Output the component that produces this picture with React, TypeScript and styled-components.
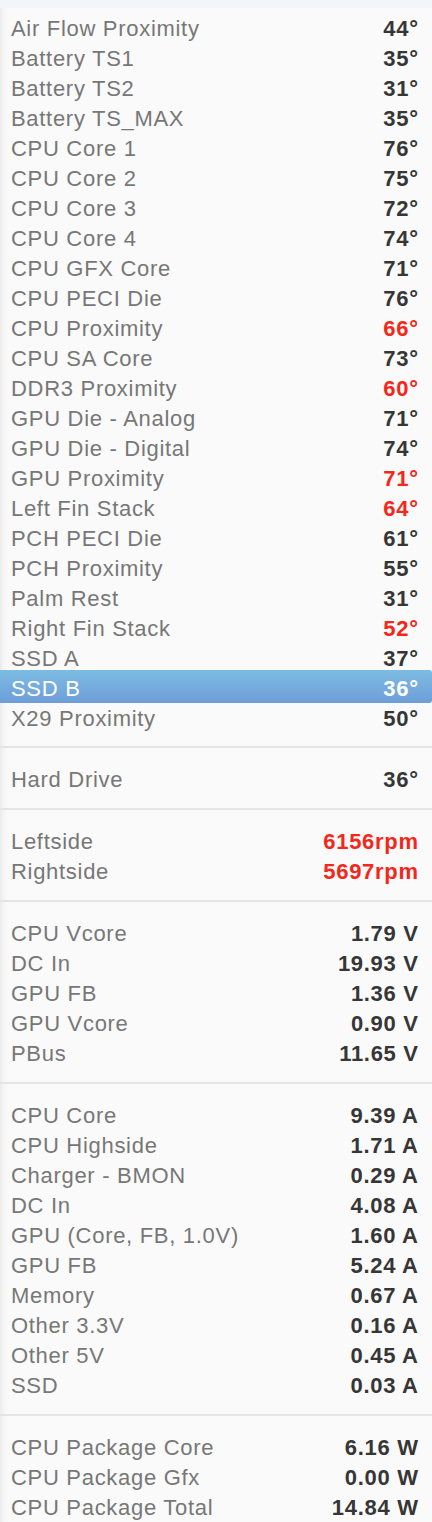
import React from 'react';
import styled, { createGlobalStyle } from 'styled-components';

interface ISensor {
  name: string;
  value: string;
  hot?: boolean;
  selected?: boolean;
}

const GlobalStyle = createGlobalStyle`
  html, body {
    margin: 0;
    padding: 0;
    background: #fafafa;
  }
  body {
    font-family: 'Liberation Sans', Arial, sans-serif;
  }
`;

const Panel = styled.div`
  width: 432px;
  height: 1522px;
  overflow: hidden;
  background: linear-gradient(to right, #ebebeb 0px, #f6f6f6 4px, #fafafa 9px);
`;

const TopBand = styled.div`
  height: 8px;
  background: #f2f6fb;
`;

const Group = styled.section<{ $first?: boolean }>`
  padding: ${(p) => (p.$first ? '5px 0 13px' : '16px 0 14px')};
  border-top: ${(p) => (p.$first ? 'none' : '2px solid #e4e4e4')};
`;

const Row = styled.div<{ $selected?: boolean }>`
  display: flex;
  justify-content: space-between;
  align-items: center;
  box-sizing: border-box;
  height: 30px;
  padding: 2px 14px 0 11px;
  font-size: 22px;
  letter-spacing: 0.7px;
  ${(p) =>
    p.$selected &&
    `
    height: 33px;
    margin-top: -3px;
    padding-top: 5px;
    border-radius: 0 3px 3px 0;
    background: linear-gradient(to bottom, #7cbce3, #6e9ed8);
  `}
`;

const Label = styled.span<{ $selected?: boolean }>`
  color: ${(p) => (p.$selected ? '#ffffff' : '#777777')};
  white-space: nowrap;
`;

const Value = styled.span<{ $hot?: boolean; $selected?: boolean }>`
  font-weight: 700;
  white-space: nowrap;
  margin-right: -0.7px;
  color: ${(p) => (p.$selected ? '#ffffff' : p.$hot ? '#f5261a' : '#363636')};
`;

const groups: ISensor[][] = [
  [
    { name: 'Air Flow Proximity', value: '44°' },
    { name: 'Battery TS1', value: '35°' },
    { name: 'Battery TS2', value: '31°' },
    { name: 'Battery TS_MAX', value: '35°' },
    { name: 'CPU Core 1', value: '76°' },
    { name: 'CPU Core 2', value: '75°' },
    { name: 'CPU Core 3', value: '72°' },
    { name: 'CPU Core 4', value: '74°' },
    { name: 'CPU GFX Core', value: '71°' },
    { name: 'CPU PECI Die', value: '76°' },
    { name: 'CPU Proximity', value: '66°', hot: true },
    { name: 'CPU SA Core', value: '73°' },
    { name: 'DDR3 Proximity', value: '60°', hot: true },
    { name: 'GPU Die - Analog', value: '71°' },
    { name: 'GPU Die - Digital', value: '74°' },
    { name: 'GPU Proximity', value: '71°', hot: true },
    { name: 'Left Fin Stack', value: '64°', hot: true },
    { name: 'PCH PECI Die', value: '61°' },
    { name: 'PCH Proximity', value: '55°' },
    { name: 'Palm Rest', value: '31°' },
    { name: 'Right Fin Stack', value: '52°', hot: true },
    { name: 'SSD A', value: '37°' },
    { name: 'SSD B', value: '36°', selected: true },
    { name: 'X29 Proximity', value: '50°' },
  ],
  [{ name: 'Hard Drive', value: '36°' }],
  [
    { name: 'Leftside', value: '6156rpm', hot: true },
    { name: 'Rightside', value: '5697rpm', hot: true },
  ],
  [
    { name: 'CPU Vcore', value: '1.79 V' },
    { name: 'DC In', value: '19.93 V' },
    { name: 'GPU FB', value: '1.36 V' },
    { name: 'GPU Vcore', value: '0.90 V' },
    { name: 'PBus', value: '11.65 V' },
  ],
  [
    { name: 'CPU Core', value: '9.39 A' },
    { name: 'CPU Highside', value: '1.71 A' },
    { name: 'Charger - BMON', value: '0.29 A' },
    { name: 'DC In', value: '4.08 A' },
    { name: 'GPU (Core, FB, 1.0V)', value: '1.60 A' },
    { name: 'GPU FB', value: '5.24 A' },
    { name: 'Memory', value: '0.67 A' },
    { name: 'Other 3.3V', value: '0.16 A' },
    { name: 'Other 5V', value: '0.45 A' },
    { name: 'SSD', value: '0.03 A' },
  ],
  [
    { name: 'CPU Package Core', value: '6.16 W' },
    { name: 'CPU Package Gfx', value: '0.00 W' },
    { name: 'CPU Package Total', value: '14.84 W' },
  ],
];

export default function App() {
  return (
    <>
      <GlobalStyle />
      <Panel>
        <TopBand />
        {groups.map((sensors, gi) => (
          <Group key={gi} $first={gi === 0}>
            {sensors.map((s) => (
              <Row key={s.name} $selected={s.selected}>
                <Label $selected={s.selected}>{s.name}</Label>
                <Value $hot={s.hot} $selected={s.selected}>
                  {s.value}
                </Value>
              </Row>
            ))}
          </Group>
        ))}
      </Panel>
    </>
  );
}
